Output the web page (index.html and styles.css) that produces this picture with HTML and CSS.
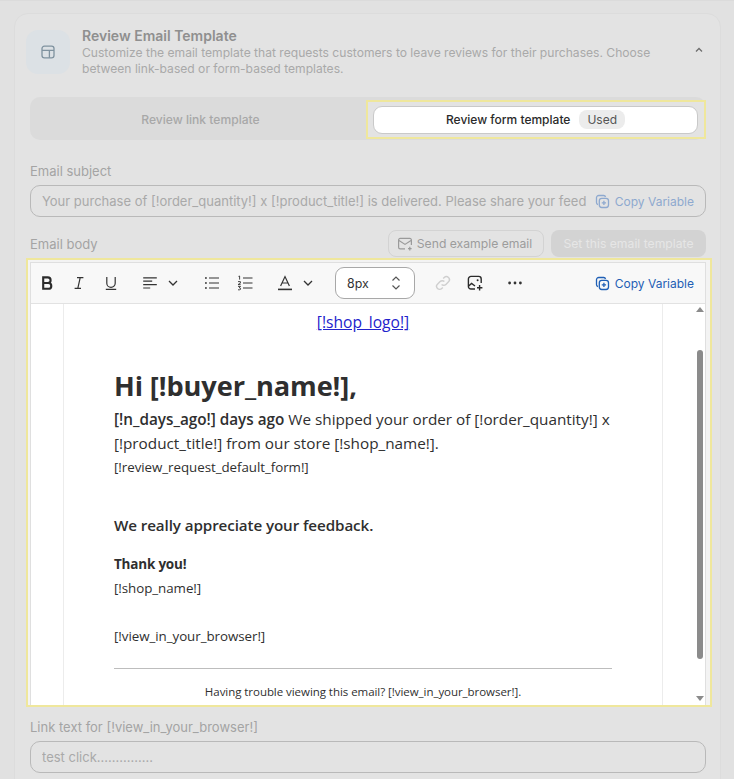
FILE: index.html
```html
<!DOCTYPE html>
<html lang="en">
<head>
<meta charset="utf-8">
<title>Review Email Template</title>
<link rel="stylesheet" href="styles.css">
</head>
<body>
<div class="top-strip"></div>
<section class="card">
  <header class="head">
    <div class="head-icon">
      <svg width="16" height="16" viewBox="0 0 16 16" fill="none" stroke="#7f929f" stroke-width="1.3"><rect x="2" y="2.2" width="12" height="11.6" rx="2.4"/><path d="M2 6.4h12M9.4 6.4v7.4"/></svg>
    </div>
    <div class="head-text">
      <h2>Review Email Template</h2>
      <p>Customize the email template that requests customers to leave reviews for their purchases. Choose between link-based or form-based templates.</p>
    </div>
    <svg class="chev-up" width="12" height="12" viewBox="0 0 12 12" fill="none" stroke="#6e6e6e" stroke-width="1.3"><path d="M3 7.5 6 4.5l3 3"/></svg>
  </header>

  <div class="tabs">
    <div class="tab-off">Review link template</div>
    <div class="tab-on-wrap">
      <div class="tab-on"><span>Review form template</span><span class="used">Used</span></div>
    </div>
  </div>

  <label class="lbl subj-lbl">Email subject</label>
  <div class="field subj-field">
    <span class="field-text">Your purchase of [!order_quantity!] x [!product_title!] is delivered. Please share your feed</span>
    <span class="copy dim">
      <svg width="15" height="15" viewBox="0 0 16 16" fill="none" stroke="currentColor" stroke-width="1.4"><path d="M3.2 11.2A2 2 0 0 1 1.6 9.2V4A2.4 2.4 0 0 1 4 1.6h5.2a2 2 0 0 1 2 1.6"/><rect x="4.6" y="4.6" width="9.8" height="9.8" rx="2.6"/><path d="M9.5 7.2v4.6M7.2 9.5h4.6"/></svg>
      Copy Variable
    </span>
  </div>

  <div class="body-row">
    <label class="lbl">Email body</label>
    <div class="actions">
      <button class="btn-send">
        <svg width="16" height="16" viewBox="0 0 16 16" fill="none" stroke="#9a9a9a" stroke-width="1.2"><path d="M8 12.8H3.2a1.6 1.6 0 0 1-1.6-1.6V4a1.6 1.6 0 0 1 1.6-1.6h9.6A1.6 1.6 0 0 1 14.4 4v5"/><path d="m2 4.4 6 4 6-4M12.8 10.8v3.6M11 12.6h3.6"/></svg>
        Send example email
      </button>
      <button class="btn-set">Set this email template</button>
    </div>
  </div>

  <div class="editor">
    <div class="editor-inner">
    <div class="toolbar">
      <svg class="t-b" width="16" height="16" viewBox="0 0 16 16" fill="none" stroke="#2b2b2b" stroke-width="2.1"><path d="M4.2 2.4h4.6a2.8 2.8 0 0 1 0 5.6H4.2zM4.2 8h5.2a2.9 2.9 0 0 1 0 5.8H4.2z"/></svg>
      <svg class="t-i" width="16" height="16" viewBox="0 0 16 16" fill="none" stroke="#333" stroke-width="1.2"><path d="M6 2.6h6.4M3.6 13.4H10M9.2 2.6 6.8 13.4"/></svg>
      <svg class="t-u" width="16" height="16" viewBox="0 0 16 16" fill="none" stroke="#333" stroke-width="1.2"><path d="M3.8 2v6.2a4.2 4.2 0 0 0 8.4 0V2M2.8 14.4h10.4"/></svg>
      <span class="t-align">
        <svg width="16" height="16" viewBox="0 0 16 16" fill="none" stroke="#333" stroke-width="1.2"><path d="M1.2 2.8h13.6M1.2 6.2h9M1.2 9.6h13.6M1.2 13h7"/></svg>
        <svg class="c" width="12" height="12" viewBox="0 0 12 12" fill="none" stroke="#333" stroke-width="1.3"><path d="m2 4 4 4 4-4"/></svg>
      </span>
      <svg class="t-ul" width="16" height="16" viewBox="0 0 16 16" fill="none" stroke="#333" stroke-width="1.2"><path d="M5 3h10M5 8h10M5 13h10"/><path stroke-width="1.6" d="M1 3h1.8M1 8h1.8M1 13h1.8"/></svg>
      <svg class="t-ol" width="16" height="16" viewBox="0 0 16 16" fill="none" stroke="#333" stroke-width="1.2"><path d="M6 3h9.5M6 8h9.5M6 13h9.5"/><path stroke-width=".9" d="M1.5 1.4 2.6 1v3.6M1 6.6h2.4V8.2L1 9.6h2.6M1 11.4h2.6L2 12.8h.6a1 1 0 0 1 0 2H1"/></svg>
      <span class="t-color">
        <svg width="16" height="16" viewBox="0 0 16 16" fill="none" stroke="#333" stroke-width="1.2"><path d="M3.6 11 8 1.6 12.4 11M5 8h6"/><path stroke-width="1.6" d="M1 14.4h14"/></svg>
        <svg class="c" width="12" height="12" viewBox="0 0 12 12" fill="none" stroke="#333" stroke-width="1.3"><path d="m2 4 4 4 4-4"/></svg>
      </span>
      <div class="size-box">
        <span>8px</span>
        <svg width="10" height="16" viewBox="0 0 10 16" fill="none" stroke="#555" stroke-width="1.2"><path d="m1.5 5.5 3.5-3.5 3.5 3.5M1.5 10.5 5 14l3.5-3.5"/></svg>
      </div>
      <svg class="t-link" width="16" height="16" viewBox="0 0 16 16" fill="none" stroke="#cfcfcf" stroke-width="1.4"><path d="M6.6 9.4a3 3 0 0 0 4.3 0l2.6-2.6a3 3 0 0 0-4.3-4.3l-1 1M9.4 6.6a3 3 0 0 0-4.3 0L2.5 9.2a3 3 0 0 0 4.3 4.3l1-1"/></svg>
      <svg class="t-img" width="16" height="16" viewBox="0 0 16 16" fill="none" stroke="#2b2b2b" stroke-width="1.4"><path d="M8 14H4a2.6 2.6 0 0 1-2.6-2.6V4A2.6 2.6 0 0 1 4 1.4h7.6A2.6 2.6 0 0 1 14.2 4v4"/><path d="m1.6 11 3-2.6L8 11M12.6 10v5.4M10 12.7h5.4"/><circle cx="10.6" cy="5.2" r="1" fill="#2b2b2b" stroke="none"/></svg>
      <svg class="t-more" width="16" height="16" viewBox="0 0 16 16" fill="#333"><circle cx="2.6" cy="8" r="1.4"/><circle cx="8" cy="8" r="1.4"/><circle cx="13.4" cy="8" r="1.4"/></svg>
      <span class="copy live">
        <svg width="15" height="15" viewBox="0 0 16 16" fill="none" stroke="currentColor" stroke-width="1.4"><path d="M3.2 11.2A2 2 0 0 1 1.6 9.2V4A2.4 2.4 0 0 1 4 1.6h5.2a2 2 0 0 1 2 1.6"/><rect x="4.6" y="4.6" width="9.8" height="9.8" rx="2.6"/><path d="M9.5 7.2v4.6M7.2 9.5h4.6"/></svg>
        Copy Variable
      </span>
    </div>
    <div class="viewport">
      <div class="mail-outer">
        <div class="mail">
          <a class="logo-link" href="#">[!shop_logo!]</a>
          <div class="mail-body">
            <h1>Hi [!buyer_name!],</h1>
            <p class="lead"><strong>[!n_days_ago!] days ago</strong> We shipped your order of [!order_quantity!] x [!product_title!] from our store [!shop_name!].</p>
            <p class="small">[!review_request_default_form!]</p>
            <h3>We really appreciate your feedback.</h3>
            <p class="thanks">Thank you!</p>
            <p class="small shop">[!shop_name!]</p>
            <p class="small view">[!view_in_your_browser!]</p>
            <hr>
            <p class="trouble">Having trouble viewing this email? [!view_in_your_browser!].</p>
          </div>
        </div>
      </div>
      <div class="scroll">
        <span class="arr-up"></span>
        <span class="thumb"></span>
        <span class="arr-down"></span>
      </div>
    </div>
    </div>
  </div>

  <label class="lbl link-lbl">Link text for [!view_in_your_browser!]</label>
  <div class="field last">
    <span class="field-text">test click...............</span>
  </div>
</section>
</body>
</html>
```

FILE: styles.css
```css
* { box-sizing: border-box; }
html, body { margin: 0; height: 779px; overflow: hidden; }
body { background: #e1e1e1; font-family: Inter, "Liberation Sans", sans-serif; color: #9b9b9b; }
.top-strip { height: 1px; background: #dbdbdb; }
.card {
  margin: 12px 13px 0 14px;
  height: 790px;
  padding: 0 15px;
  background: #e3e3e3;
  border: 1px solid #dcdcdc;
  border-radius: 14px;
}
.head { display: flex; align-items: flex-start; padding-top: 16px; margin-left: -4px; height: 83px; }
.head-icon {
  width: 44px; height: 44px; border-radius: 12px; background: #dce1e5;
  display: flex; align-items: center; justify-content: center; flex: none;
}
.head-text { margin-left: 12px; width: 580px; }
.head-text h2 { margin: -3px 0 0; font-size: 14px; line-height: 18px; font-weight: 600; color: #8f8f8f; }
.head-text p { margin: 0; font-size: 12.1px; line-height: 16px; color: #a9a9a9; }
.chev-up { margin: 14px 0 0 32px; flex: none; }
.tabs { display: flex; height: 43px; width: 676px; background: #dbdbdb; border-radius: 10px; }
.tab-off { width: 336px; padding: 15px 0 0 5px; text-align: center; font-size: 12.1px; line-height: 16px; font-weight: 500; color: #a8a8a8; }
.tab-on-wrap { width: 340px; height: 39px; margin-top: 3px; padding: 4px 6px 3px 5px; border: 2px solid #efe79c; background: #e3e3e3; }
.tab-on {
  height: 28px; background: #fff; border: 1px solid #c9c9c9; border-radius: 9px;
  display: flex; align-items: center; justify-content: center; gap: 9px;
  padding-bottom: 2px; font-size: 12px; font-weight: 500; color: #2a2a2a;
}
.used { background: #ececec; color: #555; border-radius: 8px; padding: 1px 8px; line-height: 17px; font-weight: 400; font-size: 12px; }
.lbl { display: block; font-size: 13px; line-height: 16px; color: #a4a4a4; }
.subj-lbl { margin-top: 23px; }
.field {
  margin-top: 6px; width: 676px; height: 32px; border: 1px solid #b9b9b9; border-radius: 10px;
  display: flex; align-items: center; padding: 0 11px 0 11px; font-size: 13px; color: #a9a9a9;
}
.subj-field { margin-top: 6px; }
.field-text { flex: 1; min-width: 0; white-space: nowrap; overflow: hidden; }
.copy { display: inline-flex; align-items: center; gap: 5px; white-space: nowrap; font-size: 12px; flex: none; margin-left: 5px; }
.copy.dim { color: #8ea9cf; }
.copy.live { color: #1f5fb5; margin-left: auto; margin-right: 11px; }
.body-row { display: flex; justify-content: space-between; align-items: flex-end; width: 676px; margin-top: 12px; height: 28px; }
.body-row .lbl { margin-bottom: 5px; }
.actions { display: flex; gap: 7px; }
.actions button { font: inherit; height: 27px; border-radius: 8px; font-size: 12.2px; display: flex; align-items: center; justify-content: center; padding: 0; }
.btn-send { width: 156px; gap: 4px; background: #e3e3e3; border: 1px solid #d3d3d3; color: #9c9c9c; font-weight: 500; padding-right: 3px !important; }
.btn-set { width: 155px; background: #d3d3d3; border: 0; color: #e6e6e6; font-weight: 600; }
.editor {
  width: 686px; height: 449px; margin: 1px 0 0 -4px;
  border: 2px solid #efe79c; padding: 2px 4px 0 2px; background: #f3f3f3;
  overflow: hidden;
}
.editor-inner { height: 100%; border: 1px solid #dfdfdf; border-bottom: 0; background: #fff; overflow: hidden; }
.toolbar {
  height: 41px; background: #f8f8f8; border-bottom: 1px solid #e2e2e2;
  display: flex; align-items: center; padding-left: 8px;
}
.toolbar > svg, .toolbar > span, .toolbar > div { flex: none; }
.t-i { margin-left: 16px; }
.t-u { margin-left: 16px; }
.t-align { margin-left: 23px; display: flex; align-items: center; gap: 9px; }
.t-ul { margin-left: 25px; }
.t-ol { margin-left: 17px; }
.t-color { margin-left: 24px; display: flex; align-items: center; gap: 9px; }
.c { display: block; }
.size-box {
  margin-left: 21px; width: 80px; height: 32px; border: 1px solid #a8a8a8; border-radius: 9px; background: #fff;
  display: flex; align-items: center; justify-content: space-between; padding: 0 13px 0 11px; font-size: 12.4px; color: #333;
}
.t-link { margin-left: 20px; }
.t-img { margin-left: 16px; }
.t-more { margin-left: 24px; }
.viewport { display: flex; height: 403px; overflow: hidden; }
.mail-outer { width: 664px; padding-left: 32px; flex: none; }
.mail {
  width: 600px; height: 403px; padding: 8px 50px 0 50px; border-left: 1px solid #ececec; border-right: 1px solid #ececec;
  font-family: "Open Sans", "Noto Sans", sans-serif; color: #2f2f2f;
}
.logo-link { display: block; text-align: center; color: #2222cc; font-size: 15.6px; line-height: 20px; text-decoration: underline; }
.mail-body { padding-top: 36px; }
.mail-body h1 { margin: 0; font-size: 27.2px; line-height: 36px; font-weight: 700; letter-spacing: -.1px; }
.mail-body p { margin: 0; }
.lead { font-size: 15.3px; line-height: 24px; margin-top: 3px !important; width: 498px; letter-spacing: -.01px; }
.lead strong { font-weight: 600; }
.small { font-size: 13.35px; line-height: 24px; letter-spacing: -.05px; }
.mail-body h3 { margin: 34px 0 0; font-size: 15.2px; line-height: 24px; font-weight: 600; letter-spacing: -.1px; }
.thanks { margin-top: 15px !important; font-size: 13.5px; line-height: 24px; font-weight: 700; letter-spacing: -.2px; }
.shop { margin-top: 0 !important; }
.view { margin-top: 24px !important; }
.mail-body hr { margin: 20px 0 0; border: 0; border-top: 1px solid #bdbdbd; }
.trouble { margin-top: 13px !important; text-align: center; font-size: 11.5px; line-height: 20px; letter-spacing: -.05px; }
.scroll { position: relative; flex: 1; }
.thumb { position: absolute; left: 2px; top: 46px; width: 6px; height: 309px; border-radius: 3px; background: #8b8b8b; }
.arr-up { position: absolute; left: 1px; top: 3px; width: 0; height: 0; border: 4px solid transparent; border-top: 0; border-bottom: 5px solid #8b8b8b; }
.arr-down { position: absolute; left: 1px; top: 392px; width: 0; height: 0; border: 4px solid transparent; border-bottom: 0; border-top: 5px solid #8b8b8b; }
.link-lbl { margin-top: 12px; }
.last { margin-top: 6px; }
```
